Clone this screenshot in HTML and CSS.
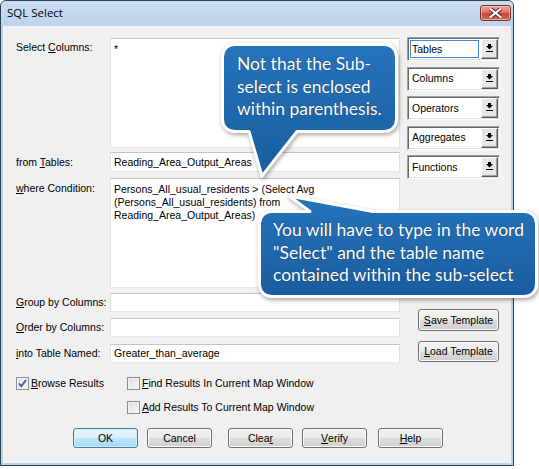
FILE: index.html
```html
<!DOCTYPE html>
<html>
<head>
<meta charset="utf-8">
<link rel="stylesheet" href="styles.css">
</head>
<body>
<div class="page">
  <div class="window">
    <div class="titlebar">
      <span class="title">SQL Select</span>
      <span class="close">
        <svg width="13" height="10" viewBox="0 0 13 10">
          <path d="M1.5 1 L11.5 9 M11.5 1 L1.5 9" stroke="#4a2020" stroke-width="4" stroke-linecap="square"/>
          <path d="M1.5 1 L11.5 9 M11.5 1 L1.5 9" stroke="#ffffff" stroke-width="2.2" stroke-linecap="square"/>
        </svg>
      </span>
    </div>
    <div class="client">
      <div class="top">
        <div class="form">
          <div class="row r1"><div class="lbl lbl-top">Select <u>C</u>olumns:</div><div class="field area">*</div></div>
          <div class="row r2"><div class="lbl">from <u>T</u>ables:</div><div class="field">Reading_Area_Output_Areas</div></div>
          <div class="row r3"><div class="lbl lbl-top"><u>w</u>here Condition:</div><div class="field area">Persons_All_usual_residents &gt; (Select Avg<br>(Persons_All_usual_residents) from<br>Reading_Area_Output_Areas)</div></div>
          <div class="row r4"><div class="lbl"><u>G</u>roup by Columns:</div><div class="field"></div></div>
          <div class="row r5"><div class="lbl"><u>O</u>rder by Columns:</div><div class="field"></div></div>
          <div class="row r6"><div class="lbl"><u>i</u>nto Table Named:</div><div class="field">Greater_than_average</div></div>
        </div>
        <div class="side">
          <div class="combo"><span class="combo-text focused">Tables</span><span class="combo-btn"><svg width="7" height="9" viewBox="0 0 7 9"><rect x="2" y="0" width="3" height="2"/><polygon points="0,2 7,2 3.5,5.6"/><rect x="0" y="7" width="7" height="1"/></svg></span></div>
          <div class="combo"><span class="combo-text">Columns</span><span class="combo-btn"><svg width="7" height="9" viewBox="0 0 7 9"><rect x="2" y="0" width="3" height="2"/><polygon points="0,2 7,2 3.5,5.6"/><rect x="0" y="7" width="7" height="1"/></svg></span></div>
          <div class="combo"><span class="combo-text">Operators</span><span class="combo-btn"><svg width="7" height="9" viewBox="0 0 7 9"><rect x="2" y="0" width="3" height="2"/><polygon points="0,2 7,2 3.5,5.6"/><rect x="0" y="7" width="7" height="1"/></svg></span></div>
          <div class="combo"><span class="combo-text">Aggregates</span><span class="combo-btn"><svg width="7" height="9" viewBox="0 0 7 9"><rect x="2" y="0" width="3" height="2"/><polygon points="0,2 7,2 3.5,5.6"/><rect x="0" y="7" width="7" height="1"/></svg></span></div>
          <div class="combo"><span class="combo-text">Functions</span><span class="combo-btn"><svg width="7" height="9" viewBox="0 0 7 9"><rect x="2" y="0" width="3" height="2"/><polygon points="0,2 7,2 3.5,5.6"/><rect x="0" y="7" width="7" height="1"/></svg></span></div>
          <div class="tpl">
            <div class="btn btn-tpl"><u>S</u>ave Template</div>
            <div class="btn btn-tpl"><u>L</u>oad Template</div>
          </div>
        </div>
      </div>
      <div class="checks">
        <div class="check-row">
          <div class="check c1"><span class="box"><svg width="11" height="11" viewBox="0 0 11 11"><path d="M2 5.5 L4.3 8.2 L9 2" fill="none" stroke="#3d59a4" stroke-width="1.8"/></svg></span><span class="ctext"><u>B</u>rowse Results</span></div>
          <div class="check c2"><span class="box"></span><span class="ctext"><u>F</u>ind Results In Current Map Window</span></div>
        </div>
        <div class="check-row row-2">
          <div class="check c2"><span class="box"></span><span class="ctext"><u>A</u>dd Results To Current Map Window</span></div>
        </div>
      </div>
      <div class="buttons">
        <div class="btn btn-main btn-default">OK</div>
        <div class="btn btn-main">Cancel</div>
        <div class="btn btn-main b-clear">Clea<u>r</u></div>
        <div class="btn btn-main"><u>V</u>erify</div>
        <div class="btn btn-main b-help"><u>H</u>elp</div>
      </div>
    </div>
  </div>

  <div class="callout callout-1">
    <svg class="bubble" width="190" height="145" viewBox="0 0 190 145">
      <defs>
        <linearGradient id="g1" x1="0" y1="0" x2="0" y2="1">
          <stop offset="0" stop-color="#2574bb"/>
          <stop offset="1" stop-color="#1a5c9f"/>
        </linearGradient>
      </defs>
      <path d="M19.5 6.5 H169.5 A12 12 0 0 1 181.5 18.5 V81.5 A12 12 0 0 1 169.5 93.5 H82 L47 138 L34 93.5 H19.5 A12 12 0 0 1 7.5 81.5 V18.5 A12 12 0 0 1 19.5 6.5 Z" fill="url(#g1)" stroke="#ffffff" stroke-width="3" stroke-linejoin="round"/>
    </svg>
    <div class="ctext-bubble t1">Not that the Sub-<br>select is enclosed<br>within parenthesis.</div>
  </div>

  <div class="callout callout-2">
    <svg class="bubble" width="289" height="118" viewBox="0 0 289 118">
      <defs>
        <linearGradient id="g2" x1="0" y1="0" x2="0" y2="1">
          <stop offset="0" stop-color="#2574bb"/>
          <stop offset="1" stop-color="#1a5c9f"/>
        </linearGradient>
      </defs>
      <path d="M21.5 23.5 H60 L39 8 L123 23.5 H274.5 A12 12 0 0 1 286.5 35.5 V96.5 A12 12 0 0 1 274.5 108.5 H21.5 A12 12 0 0 1 9.5 96.5 V35.5 A12 12 0 0 1 21.5 23.5 Z" fill="url(#g2)" stroke="#ffffff" stroke-width="3" stroke-linejoin="round"/>
    </svg>
    <div class="ctext-bubble t2">You will have to type in the word<br>"Select" and the table name<br>contained within the sub-select</div>
  </div>
</div>
</body>
</html>
```

FILE: styles.css
```css
html, body {
  margin: 0;
  padding: 0;
  background: #ffffff;
}

.page {
  position: relative;
  width: 539px;
  height: 469px;
  overflow: hidden;
}

.window {
  width: 514px;
  height: 466px;
  box-sizing: border-box;
  border: 1px solid #2e3f52;
  border-radius: 6px 6px 0 0;
  background: #b9d3ec;
  padding: 0 2px 2px 2px;
  display: flex;
  flex-direction: column;
}

.titlebar {
  height: 25px;
  flex: none;
  display: flex;
  align-items: flex-start;
  justify-content: space-between;
  background: linear-gradient(#cadcf1, #bcd3ec);
  margin: 0 -2px;
  padding: 0 2px 0 6px;
  border-radius: 5px 5px 0 0;
}

.title {
  font-family: "Open Sans", "Noto Sans", sans-serif;
  font-size: 11.5px;
  color: #000;
  line-height: 14px;
  margin-top: 5px;
}

.close {
  width: 31px;
  height: 16px;
  box-sizing: border-box;
  margin-top: 4px;
  border: 1px solid #7a2f27;
  border-radius: 3px;
  background: linear-gradient(#e9a899 0%, #d9776a 45%, #c4453a 55%, #cf6b55 100%);
  box-shadow: inset 0 0 0 1px rgba(255, 220, 210, 0.55);
  display: flex;
  align-items: center;
  justify-content: center;
}

.client {
  flex: 1;
  background: #f0f0f0;
  padding: 12px 0 0 13px;
  font-family: "Liberation Sans", Arial, sans-serif;
  font-size: 10.5px;
  color: #000;
  display: flex;
  flex-direction: column;
}

.top {
  display: flex;
}

.form {
  display: flex;
  flex-direction: column;
  width: 384px;
}

.row {
  display: flex;
  align-items: center;
}

.r1 { height: 110px; align-items: flex-start; }
.r2 { height: 20px; margin-top: 4px; }
.r3 { height: 110px; margin-top: 6px; align-items: flex-start; }
.r4 { height: 19px; margin-top: 5px; }
.r5 { height: 19px; margin-top: 6px; }
.r6 { height: 19px; margin-top: 7px; }

.lbl {
  width: 94px;
  flex: none;
  white-space: nowrap;
  line-height: 13px;
}

.lbl-top { padding-top: 3px; }
.r3 .lbl-top { padding-top: 4px; }

.field {
  width: 290px;
  height: 100%;
  box-sizing: border-box;
  background: #ffffff;
  border: 1px solid;
  border-color: #c2c4c9 #dfe1e6 #e5e8ec #dfe1e6;
  padding: 0 3px;
  line-height: 13px;
  display: flex;
  align-items: center;
  white-space: nowrap;
}

.field.area {
  display: block;
  padding-top: 4px;
}

.side {
  margin-left: 7px;
  margin-top: -1px;
  width: 93px;
  display: flex;
  flex-direction: column;
  gap: 5.5px;
}

.combo {
  height: 24px;
  box-sizing: border-box;
  display: flex;
  background: #ffffff;
  border: 1px solid;
  border-color: #a0a0a0 #ffffff #ffffff #a0a0a0;
  box-shadow: inset 1px 1px 0 #696969, inset -1px -1px 0 #e3e3e3;
  padding: 1px;
}

.combo-text {
  flex: 1;
  display: flex;
  align-items: center;
  padding-left: 3px;
  line-height: 13px;
}

.combo-text.focused {
  border: 1px solid #3a8ee8;
  margin: 1px 2px 1px 1px;
  padding-left: 1px;
}

.combo-btn {
  width: 17px;
  flex: none;
  box-sizing: border-box;
  background: #e6e6e6;
  border: 1px solid;
  border-color: #ffffff #5a5a5a #5a5a5a #ffffff;
  box-shadow: inset -1px -1px 0 #a0a0a0;
  display: flex;
  align-items: center;
  justify-content: center;
}

.combo-btn svg {
  fill: #000;
  margin-top: -1px;
}

.tpl {
  margin-top: 124.5px;
  margin-left: 11px;
  display: flex;
  flex-direction: column;
  gap: 10px;
}

.btn {
  box-sizing: border-box;
  border: 1px solid #707070;
  border-radius: 3px;
  background: linear-gradient(#f3f3f3 0%, #ebebeb 48%, #dddddd 52%, #cfcfcf 100%);
  box-shadow: inset 0 0 0 1px #fbfbfb;
  display: flex;
  align-items: center;
  justify-content: center;
  white-space: nowrap;
  line-height: 13px;
}

.btn-tpl {
  width: 81px;
  height: 22px;
}

.btn-tpl + .btn-tpl {
  height: 21px;
}

.checks {
  margin-top: 14px;
  display: flex;
  flex-direction: column;
  gap: 11px;
}

.check-row {
  display: flex;
  height: 13px;
}

.check {
  display: flex;
  align-items: center;
  gap: 2px;
}

.check.c1 { width: 111px; }
.row-2 .c2 { margin-left: 111px; }

.box {
  width: 13px;
  height: 13px;
  box-sizing: border-box;
  border: 1px solid #8e8f8f;
  background: linear-gradient(135deg, #dcdcdc, #fafafa);
  box-shadow: inset 0 0 0 1px #f4f4f4;
  display: flex;
  align-items: center;
  justify-content: center;
  flex: none;
}

.ctext {
  line-height: 13px;
  white-space: nowrap;
}

.buttons {
  margin-top: 14px;
  margin-left: 57px;
  display: flex;
  gap: 9px;
}

.btn-main {
  width: 65px;
  height: 20px;
}

.b-clear { margin-left: 7px; }
.b-help { margin-left: 2px; }

.btn-default {
  border-color: #3c7fb1;
  background: linear-gradient(#eaf6fd 0%, #d9f0fc 48%, #bee6fd 52%, #a7d9f5 100%);
  box-shadow: inset 0 0 0 1px #d6ecf9;
}

.callout {
  position: absolute;
}

.callout-1 {
  left: 215px;
  top: 38px;
  width: 190px;
  height: 145px;
}

.callout-2 {
  left: 250px;
  top: 188px;
  width: 289px;
  height: 118px;
}

.bubble {
  position: absolute;
  left: 0;
  top: 0;
  filter: drop-shadow(1px 2px 2px rgba(0, 0, 0, 0.35));
}

.ctext-bubble {
  position: absolute;
  font-family: Lato, "Open Sans", sans-serif;
  font-size: 17.5px;
  line-height: 22.5px;
  color: #ffffff;
  white-space: nowrap;
  text-shadow: 0 0 1px rgba(0, 0, 0, 0.6);
}

.t1 {
  left: 22px;
  top: 15px;
}

.t2 {
  left: 23px;
  top: 31px;
}
```
